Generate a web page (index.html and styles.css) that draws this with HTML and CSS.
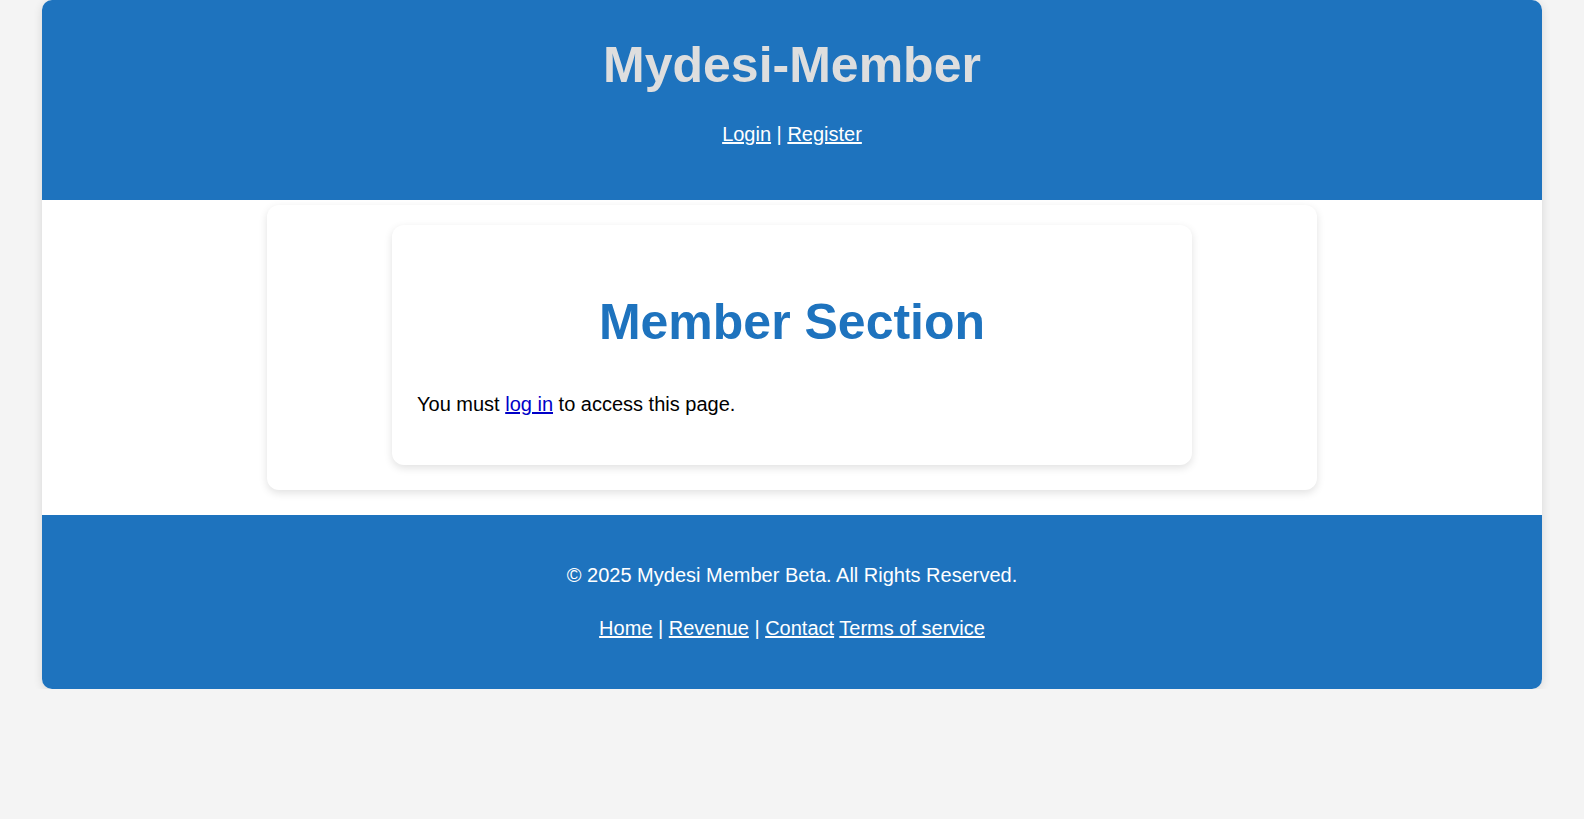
FILE: index.html
```html
<!DOCTYPE html>
<html lang="en">
<head>
<meta charset="utf-8">
<title>Mydesi-Member</title>
<link rel="stylesheet" href="styles.css">
</head>
<body>
<div class="page">
  <header class="site-header">
    <h1 class="site-title">Mydesi-Member</h1>
    <nav class="top-nav"><a href="#">Login</a> | <a href="#">Register</a></nav>
  </header>
  <main class="site-main">
    <div class="outer-card">
      <section class="inner-card">
        <h1 class="section-title">Member Section</h1>
        <p class="notice">You must <a href="#">log in</a> to access this page.</p>
      </section>
    </div>
  </main>
  <footer class="site-footer">
    <p class="copyright">© 2025 Mydesi Member Beta. All Rights Reserved.</p>
    <p class="footer-links"><a href="#">Home</a> | <a href="#">Revenue</a> | <a href="#">Contact</a> <a href="#">Terms of service</a></p>
  </footer>
</div>
</body>
</html>
```

FILE: styles.css
```css
html, body {
  margin: 0;
  padding: 0;
}
body {
  background: #f4f4f4;
  font-family: "Liberation Sans", Arial, sans-serif;
  color: #000;
}
.page {
  max-width: 1500px;
  margin: 0 auto;
  background: #fff;
  border-radius: 10px;
  box-shadow: 0 2px 10px rgba(0, 0, 0, 0.12);
}
.site-header {
  background: #1e73be;
  height: 200px;
  box-sizing: border-box;
  padding: 37px 20px 0;
  text-align: center;
  border-radius: 10px 10px 0 0;
}
.site-title {
  margin: 0;
  font-size: 50px;
  line-height: 57px;
  font-weight: bold;
  color: #dedede;
}
.top-nav {
  margin-top: 28.6px;
  font-size: 20px;
  line-height: 23px;
  color: #fff;
}
.top-nav a {
  color: #fff;
  text-decoration: underline;
}
.site-main {
  padding: 5px 0 25px;
}
.outer-card {
  width: 70%;
  margin: 0 auto;
  box-sizing: border-box;
  padding: 20px 20px 25px;
  background: #fff;
  border-radius: 12px;
  box-shadow: 0 3px 8px rgba(0, 0, 0, 0.12);
}
.inner-card {
  max-width: 800px;
  margin: 0 auto;
  box-sizing: border-box;
  padding: 69px 25px 25px;
  background: #fff;
  border-radius: 12px;
  box-shadow: 0 3px 8px rgba(0, 0, 0, 0.12);
}
.section-title {
  margin: 0 0 41px;
  font-size: 50px;
  line-height: 57.5px;
  font-weight: bold;
  color: #1e73be;
  text-align: center;
}
.notice {
  margin: 0 0 24.7px;
  font-size: 20px;
  line-height: 23px;
}
.notice a {
  color: #0000c8;
}
.site-footer {
  background: #1e73be;
  padding: 49.3px 20px 49.4px;
  text-align: center;
  color: #fff;
  border-radius: 0 0 10px 10px;
  font-size: 20px;
  line-height: 23px;
}
.copyright {
  margin: 0;
}
.footer-links {
  margin: 29.3px 0 0;
}
.footer-links a {
  color: #fff;
}
```
